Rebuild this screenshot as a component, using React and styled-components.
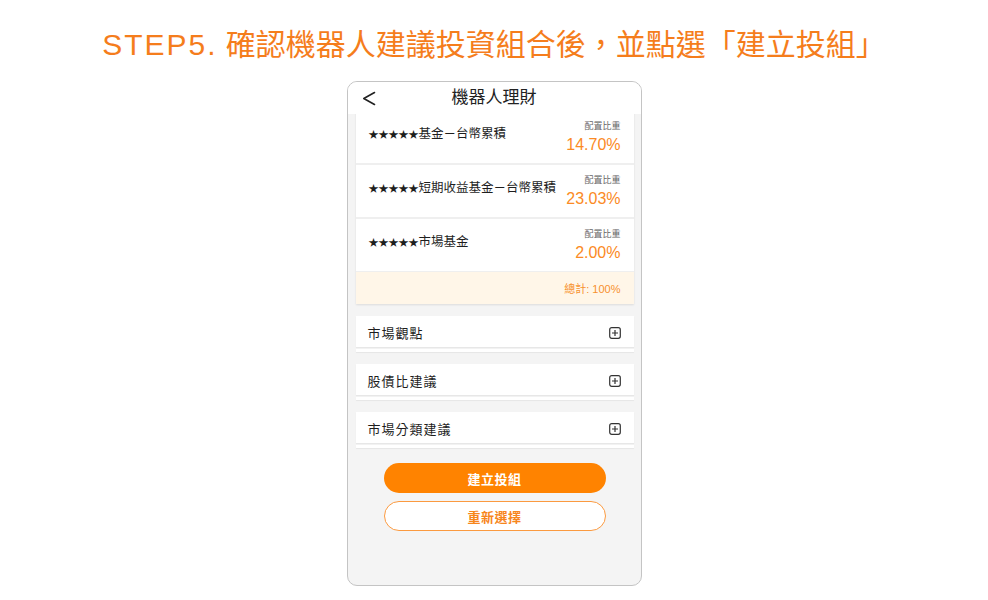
import styled, { createGlobalStyle } from "styled-components";

const GlobalStyle = createGlobalStyle`
   body {
      margin: 0;
      background: #ffffff;
      font-family: "Liberation Sans", "Noto Sans CJK TC", sans-serif;
   }
`;

const Page = styled.div`
   width: 988px;
   height: 600px;
   display: flex;
   flex-direction: column;
   align-items: center;
   overflow: hidden;
`;

const StepTitle = styled.h1`
   margin: 27px 0 0;
   height: 36px;
   line-height: 36px;
   font-size: 30px;
   font-weight: 400;
   color: #f57d1c;
   white-space: nowrap;

   .step {
      letter-spacing: 2px;
   }
`;

const Phone = styled.div`
   margin-top: 18px;
   width: 293px;
   height: 503px;
   border: 1px solid #c4c4c4;
   border-radius: 10px;
   background: #f4f4f4;
   overflow: hidden;
   display: flex;
   flex-direction: column;
`;

const NavBar = styled.div`
   height: 32px;
   flex-shrink: 0;
   background: #ffffff;
   display: grid;
   grid-template-columns: 44px 1fr 44px;
   align-items: center;
   position: relative;
   z-index: 1;

   .title {
      text-align: center;
      font-size: 17px;
      font-weight: 400;
      color: #222;
      line-height: 32px;
   }
   svg {
      margin-left: 14px;
   }
`;

const Body = styled.div`
   flex-grow: 1;
   padding: 0 7px 0 8px;
   display: flex;
   flex-direction: column;
   overflow: hidden;
`;

const FundCard = styled.div`
   margin-top: -3px;
   display: flex;
   flex-direction: column;
   gap: 2px;
   background: #efefef;
   box-shadow: 0 1px 2px rgb(0 0 0 / 0.1);
`;

const FundRow = styled.div`
   height: 52px;
   background: #ffffff;
   display: flex;
   justify-content: space-between;
   padding: 0 13px;

   .name {
      padding-top: 15px;
      line-height: 16px;
      font-size: 12.5px;
      color: #1e1e1e;
      white-space: nowrap;
      .stars {
         font-size: 10px;
      }
   }
   .ratio {
      padding-top: 9px;
      text-align: right;
      .label {
         display: block;
         font-size: 9px;
         line-height: 12px;
         color: #666;
      }
      .value {
         display: block;
         margin-top: 3px;
         font-size: 16px;
         line-height: 20px;
         color: #fb8a24;
      }
   }
`;

const TotalRow = styled.div`
   margin-top: -1px;
   height: 32px;
   background: #fff6e8;
   display: flex;
   justify-content: flex-end;
   align-items: center;
   padding: 0 13px;
   font-size: 11px;
   color: #f7912e;
`;

const Sections = styled.div`
   margin-top: 12px;
   display: flex;
   flex-direction: column;
   gap: 12px;
`;

const Section = styled.div`
   display: flex;
   flex-direction: column;
   gap: 2px;

   .head {
      height: 31px;
      background: #ffffff;
      display: flex;
      align-items: center;
      justify-content: space-between;
      padding: 2px 13px 0 12px;
      box-sizing: border-box;
      font-size: 13px;
      color: #1e1e1e;
      letter-spacing: 1px;
      box-shadow: 0 1px 1px rgb(0 0 0 / 0.05);
   }
   .strip {
      height: 3px;
      background: #ffffff;
      box-shadow: 0 1px 1px rgb(0 0 0 / 0.06);
   }
`;

const Actions = styled.div`
   margin-top: 15px;
   display: flex;
   flex-direction: column;
   align-items: center;
   gap: 8px;
`;

const Button = styled.div`
   width: 222px;
   height: 30px;
   box-sizing: border-box;
   border-radius: 15px;
   display: flex;
   align-items: center;
   justify-content: center;
   font-size: 13px;
   font-weight: 700;
   letter-spacing: 0.5px;
   background: ${(p) => (p.$outline ? "#ffffff" : "#ff8300")};
   color: ${(p) => (p.$outline ? "#f7861c" : "#ffffff")};
   border: ${(p) => (p.$outline ? "1px solid #fb9a40" : "none")};
`;

const BackIcon = () => (
   <svg width="14" height="15" viewBox="0 0 14 15">
      <polyline points="12.5,1.5 1.8,7.5 12.5,13.5" fill="none" stroke="#222" strokeWidth="1.6" strokeLinecap="round" strokeLinejoin="round" />
   </svg>
);

const PlusBox = () => (
   <svg width="12" height="12" viewBox="0 0 12 12">
      <rect x="0.7" y="0.7" width="10.6" height="10.6" rx="2" fill="none" stroke="#333" strokeWidth="1.2" />
      <path d="M6 3v6M3 6h6" stroke="#333" strokeWidth="1.2" />
   </svg>
);

const funds = [
   { name: "基金－台幣累積", value: "14.70%" },
   { name: "短期收益基金－台幣累積", value: "23.03%" },
   { name: "市場基金", value: "2.00%" },
];

const sections = ["市場觀點", "股債比建議", "市場分類建議"];

const App = () => {
   return (
      <Page>
         <GlobalStyle />
         <StepTitle>
            <span className="step">STEP5.</span> 確認機器人建議投資組合後，並點選「建立投組」
         </StepTitle>
         <Phone>
            <NavBar>
               <BackIcon />
               <span className="title">機器人理財</span>
               <span />
            </NavBar>
            <Body>
               <FundCard>
                  {funds.map((f) => (
                     <FundRow key={f.name}>
                        <span className="name">
                           <span className="stars">★★★★★</span>
                           {f.name}
                        </span>
                        <div className="ratio">
                           <span className="label">配置比重</span>
                           <span className="value">{f.value}</span>
                        </div>
                     </FundRow>
                  ))}
                  <TotalRow>總計: 100%</TotalRow>
               </FundCard>
               <Sections>
                  {sections.map((s) => (
                     <Section key={s}>
                        <div className="head">
                           <span>{s}</span>
                           <PlusBox />
                        </div>
                        <div className="strip" />
                     </Section>
                  ))}
               </Sections>
               <Actions>
                  <Button>建立投組</Button>
                  <Button $outline>重新選擇</Button>
               </Actions>
            </Body>
         </Phone>
      </Page>
   );
};

export default App;
